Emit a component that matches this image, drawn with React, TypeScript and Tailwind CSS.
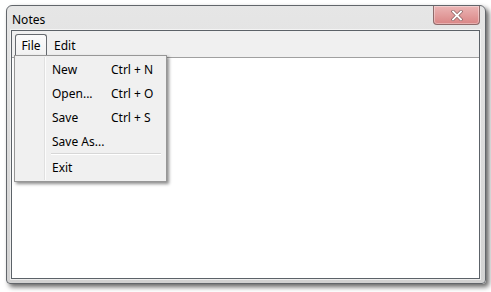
import React from "react";

const font = { fontFamily: '"Noto Sans", "Open Sans", sans-serif' };

function Item({ label, shortcut }: { label: string; shortcut?: string }) {
  return (
    <div className="flex h-[24px] items-center pt-[2px]">
      <div className="w-[36px] shrink-0" />
      <div className="w-[59px] shrink-0 text-[12px] text-black">{label}</div>
      <div className="text-[12px] text-black">{shortcut}</div>
    </div>
  );
}

export default function App() {
  return (
    <div className="relative h-[292px] w-[491px] overflow-hidden bg-white" style={font}>
      <div className="ml-[6px] mt-[5px] flex h-[279px] w-[480px] flex-col rounded-t-[6px] rounded-b-[4px] border border-[#62666b] bg-gradient-to-b from-[#e6e6e6] to-[#d2d2d2] shadow-[3px_3px_5px_rgba(0,0,0,0.6)]">
        <div className="flex h-[24px] shrink-0 items-start">
          <div className="pl-[5px] pt-[6px] text-[12px] leading-[16px] text-black">Notes</div>
          <div className="flex-1" />
          <div className="mr-[5px] flex h-[19px] w-[47px] items-center justify-center rounded-b-[4px] border border-t-0 border-[#8e6a6a] bg-gradient-to-b from-[#ebb5b5] to-[#d98585] shadow-[inset_0_0_0_1px_rgba(255,255,255,0.35)]">
            <svg width="12" height="11" viewBox="0 0 12 11">
              <path d="M2 1.5 L10 9.5 M10 1.5 L2 9.5" stroke="#8a6262" strokeWidth="3.2" strokeLinecap="square" />
              <path d="M2 1.5 L10 9.5 M10 1.5 L2 9.5" stroke="#ffffff" strokeWidth="1.8" strokeLinecap="square" />
            </svg>
          </div>
        </div>
        <div className="ml-[4px] mr-[5px] flex h-[249px] flex-col border border-[#5c6268] shadow-[0_0_0_1px_rgba(255,255,255,0.6)]">
          <div className="flex h-[27px] shrink-0 items-start border-b border-[#a0a0a0] bg-[#f0f0f0] pl-[3px] pt-[3px]">
            <div className="flex h-[21px] w-[32px] items-center justify-center rounded-t-[3px] border border-b-0 border-[#666a6f] bg-gradient-to-b from-[#fbfbfb] to-[#f2f2f2] pt-[2px] text-[12px] text-black">
              File
            </div>
            <div className="ml-[7px] flex h-[21px] items-center pt-[2px] text-[12px] text-black">Edit</div>
          </div>
          <div className="flex-1 bg-white" />
        </div>
      </div>

      <div className="absolute left-[14px] top-[55px] w-[153px] border border-[#979797] bg-[#f0f0f0] py-[1px] shadow-[2px_2px_3px_rgba(0,0,0,0.45)]">
        <div className="absolute bottom-[1px] left-[29px] top-[1px] w-[2px] border-l border-[#e0e0e0] bg-white/80" />
        <div className="relative ml-[1px]">
          <Item label="New" shortcut="Ctrl + N" />
          <Item label="Open..." shortcut="Ctrl + O" />
          <Item label="Save" shortcut="Ctrl + S" />
          <Item label="Save As..." />
          <div className="ml-[35px] mr-[5px] h-[2px] border-t border-[#d7d7d7] bg-white" />
          <Item label="Exit" />
          <div className="h-[1px]" />
        </div>
      </div>
    </div>
  );
}
